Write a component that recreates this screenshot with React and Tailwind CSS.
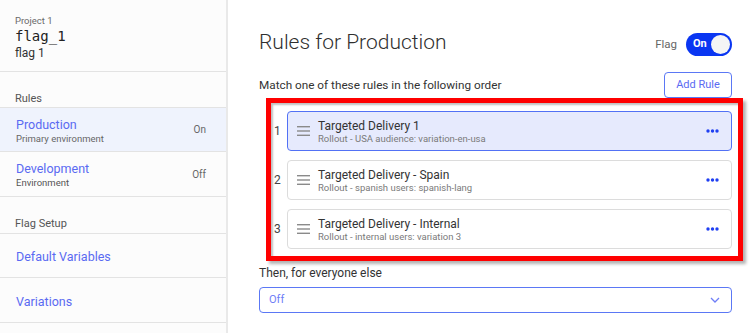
import React from "react";

const font = { fontFamily: "Roboto, 'Noto Sans', sans-serif" };

function Hamburger() {
  return (
    <svg width="13" height="10" viewBox="0 0 13 10" className="shrink-0">
      <rect x="0" y="0" width="13" height="1.4" fill="#8a8a8a" />
      <rect x="0" y="4.3" width="13" height="1.4" fill="#8a8a8a" />
      <rect x="0" y="8.6" width="13" height="1.4" fill="#8a8a8a" />
    </svg>
  );
}

function Dots() {
  return (
    <svg width="13" height="4" viewBox="0 0 13 4" className="shrink-0">
      <circle cx="2" cy="2" r="1.7" fill="#1f3ff2" />
      <circle cx="6.5" cy="2" r="1.7" fill="#1f3ff2" />
      <circle cx="11" cy="2" r="1.7" fill="#1f3ff2" />
    </svg>
  );
}

function Rule({ n, title, sub, active }) {
  return (
    <div className="flex items-center">
      <div className="w-[28px] shrink-0 pl-[15px] text-[12px] text-[#444]">{n}</div>
      <div
        className={
          "flex-1 h-[40px] flex items-center pl-[9px] pr-[12px] rounded-[4px] border " +
          (active ? "bg-[#e6eafd] border-[#5271f5]" : "bg-white border-[#dcdcdc]")
        }
      >
        <Hamburger />
        <div className="ml-[8px] flex-1 flex flex-col pt-[2px]">
          <div className="text-[12px] leading-[14px] text-[#333]">{title}</div>
          <div className="text-[9.5px] leading-[12px] text-[#7a7a7a]">{sub}</div>
        </div>
        <Dots />
      </div>
    </div>
  );
}

export default function App() {
  return (
    <div className="w-[753px] h-[333px] overflow-hidden flex bg-white" style={font}>
      {/* Sidebar */}
      <div className="w-[228px] shrink-0 h-full bg-[#fcfcfc] border-r-2 border-[#e9e9e9] flex flex-col">
        <div className="h-[72px] border-b border-[#e3e3e3] pl-[15px] pt-[14px]">
          <div className="text-[9.5px] leading-[13px] text-[#6a6a6a]">Project 1</div>
          <div className="text-[14px] leading-[18px] text-[#222]" style={{ fontFamily: "'DejaVu Sans Mono', monospace" }}>
            flag_1
          </div>
          <div className="text-[12px] leading-[17px] text-[#333]">flag 1</div>
        </div>
        <div className="h-[36px] border-b border-[#e3e3e3] pl-[15px] flex items-end pb-[0px] text-[11px] leading-[16px] text-[#555]">
          Rules
        </div>
        <div className="h-[44px] border-b border-[#e3e3e3] bg-[#eff3fd] pl-[16px] pr-[20px] flex justify-between pt-[10px]">
          <div className="flex flex-col">
            <div className="text-[12.5px] leading-[14px] text-[#5a6af2]">Production</div>
            <div className="text-[9.5px] leading-[11px] text-[#666] mt-[1px]">Primary environment</div>
          </div>
          <div className="text-[10px] text-[#666] mt-[4px]">On</div>
        </div>
        <div className="h-[45px] border-b border-[#e3e3e3] pl-[16px] pr-[20px] flex justify-between pt-[10px]">
          <div className="flex flex-col">
            <div className="text-[12.5px] leading-[14px] text-[#5a6af2]">Development</div>
            <div className="text-[9.5px] leading-[11px] text-[#555] mt-[1px]">Environment</div>
          </div>
          <div className="text-[10px] text-[#666] mt-[5px]">Off</div>
        </div>
        <div className="h-[37px] border-b border-[#e3e3e3] pl-[15px] flex items-end pb-[1px] text-[11px] leading-[16px] text-[#555]">
          Flag Setup
        </div>
        <div className="h-[44px] border-b border-[#e3e3e3] pl-[16px] pt-[4px] flex items-center text-[12.5px] text-[#5a6af2]">
          Default Variables
        </div>
        <div className="h-[45px] border-b border-[#e3e3e3] pl-[16px] pt-[4px] flex items-center text-[12.5px] text-[#5a6af2]">
          Variations
        </div>
      </div>

      {/* Main */}
      <div className="flex-1 pl-[31px] pr-[21px] flex flex-col">
        <div className="mt-[29px] h-[28px] flex items-center justify-between">
          <div className="text-[21px] font-light text-[#2f2f2f]">Rules for Production</div>
          <div className="flex items-center gap-[9px] mt-[3px]">
            <span className="text-[11.5px] text-[#666]">Flag</span>
            <div className="w-[46px] h-[23px] rounded-full bg-[#0a36f2] flex items-center justify-between pl-[7px] pr-[2px]">
              <span className="text-[11px] font-bold text-white">On</span>
              <div className="w-[19px] h-[19px] rounded-full bg-[#f5f5f5]" />
            </div>
          </div>
        </div>

        <div className="mt-[15px] h-[26px] flex items-center justify-between">
          <div className="text-[11.75px] text-[#333] mt-[2px]">Match one of these rules in the following order</div>
          <div className="h-[26px] w-[68px] rounded-[4px] border border-[#5b78f5] flex items-center justify-center text-[11px] text-[#5a6af2]">
            Add Rule
          </div>
        </div>

        <div className="relative mt-[13px] flex flex-col gap-[9px]">
          <Rule n="1" title="Targeted Delivery 1" sub="Rollout - USA audience: variation-en-usa" active />
          <Rule n="2" title="Targeted Delivery - Spain" sub="Rollout - spanish users: spanish-lang" />
          <Rule n="3" title="Targeted Delivery - Internal" sub="Rollout - internal users: variation 3" />
          <div className="absolute left-[7px] top-[-13px] w-[477px] h-[163px] border-[5px] border-[#ff0000] shadow-[3px_3px_3px_rgba(0,0,0,0.3),inset_2px_2px_2px_rgba(0,0,0,0.25)] pointer-events-none" />
        </div>

        <div className="mt-[16px] text-[12px] leading-[16px] text-[#333]">Then, for everyone else</div>
        <div className="mt-[6px] h-[26px] rounded-[4px] border border-[#5b78f5] flex items-center justify-between pl-[9px] pr-[11px]">
          <span className="text-[11px] text-[#6f7ef7]">Off</span>
          <svg width="10" height="6" viewBox="0 0 10 6">
            <path d="M1 1 L5 5 L9 1" fill="none" stroke="#6f7ef7" strokeWidth="1.3" />
          </svg>
        </div>
      </div>
    </div>
  );
}
